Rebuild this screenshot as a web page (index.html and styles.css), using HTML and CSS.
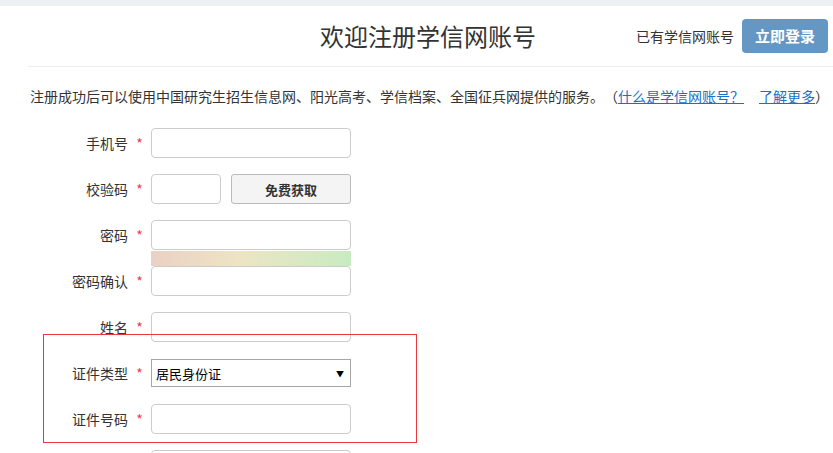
FILE: index.html
```html
<!DOCTYPE html>
<html lang="zh-CN">

<head>
  <meta charset="UTF-8">
  <meta name="viewport" content="width=device-width, initial-scale=1.0">
  <title>学信网账号注册</title>
  <link rel="stylesheet" href="styles.css">
</head>

<body>
  <div class="topbar"></div>
  <div class="header">
    <h1 class="title">欢迎注册学信网账号</h1>
    <div class="login">
      <span>已有学信网账号</span>
      <a class="login-btn" href="#">立即登录</a>
    </div>
  </div>

  <p class="intro">注册成功后可以使用中国研究生招生信息网、阳光高考、学信档案、全国征兵网提供的服务。（<a href="#">什么是学信网账号？</a><a class="more" href="#">了解更多</a>）</p>

  <form class="form">
    <div class="row">
      <label class="label">手机号</label>
      <span class="star">*</span>
      <input class="ipt" type="text">
    </div>
    <div class="row">
      <label class="label">校验码</label>
      <span class="star">*</span>
      <input class="ipt ipt-short" type="text">
      <button class="code-btn" type="button">免费获取</button>
    </div>
    <div class="row row-pwd">
      <label class="label">密码</label>
      <span class="star">*</span>
      <div class="pwd-box">
        <input class="ipt" type="password">
        <div class="strength"></div>
      </div>
    </div>
    <div class="row">
      <label class="label">密码确认</label>
      <span class="star">*</span>
      <input class="ipt" type="password">
    </div>
    <div class="row">
      <label class="label">姓名</label>
      <span class="star">*</span>
      <input class="ipt" type="text">
    </div>
    <div class="row">
      <label class="label">证件类型</label>
      <span class="star">*</span>
      <div class="select">
        <span>居民身份证</span>
        <span class="arrow">▼</span>
      </div>
    </div>
    <div class="row">
      <label class="label">证件号码</label>
      <span class="star">*</span>
      <input class="ipt" type="text">
    </div>
    <div class="row">
      <label class="label"></label>
      <span class="star"></span>
      <input class="ipt" type="text">
    </div>
  </form>

  <div class="mark"></div>
</body>

</html>
```

FILE: styles.css
```css
* {
  margin: 0;
  padding: 0;
  box-sizing: border-box;
}

body {
  font-family: "Noto Sans CJK SC", "Liberation Sans", sans-serif;
  font-size: 14px;
  color: #333;
  background: #fff;
  overflow: hidden;
  height: 453px;
  text-spacing-trim: space-all;
}

.topbar {
  height: 6px;
  background: #eef1f4;
}

.header {
  display: grid;
  grid-template-columns: 1fr auto 1fr;
  align-items: center;
  height: 61px;
  margin-left: 28px;
  padding-right: 5px;
  border-bottom: 1px solid #eceeef;
}

.title {
  grid-column: 2;
  font-size: 24px;
  font-weight: normal;
  color: #333;
  line-height: 1;
}

.login {
  grid-column: 3;
  justify-self: end;
  display: flex;
  align-items: center;
  gap: 8px;
}

.login span {
  font-size: 14px;
  color: #333;
}

.login-btn {
  display: block;
  width: 86px;
  height: 34px;
  line-height: 34px;
  text-align: center;
  background: #6497c4;
  color: #fff;
  font-weight: bold;
  font-size: 15px;
  border-radius: 4px;
  text-decoration: none;
}

.intro {
  padding: 19px 0 0 30px;
  height: 61px;
  line-height: 20px;
  font-size: 14px;
  white-space: nowrap;
}

.intro a {
  color: #1a6fc9;
  text-decoration: underline;
}

.intro .more {
  margin-left: 15px;
}

.form {
  display: flex;
  flex-direction: column;
  gap: 16px;
}

.row {
  display: flex;
  align-items: center;
  height: 30px;
}

.row-pwd {
  align-items: flex-start;
  height: 46px;
  margin-bottom: -16px;
}

.row-pwd .label,
.row-pwd .star {
  line-height: 30px;
}

.label {
  width: 128px;
  text-align: right;
  font-size: 14px;
  color: #333;
}

.star {
  width: 23px;
  text-align: center;
  color: #f3394c;
  font-size: 14px;
}

.ipt {
  width: 200px;
  height: 30px;
  border: 1px solid #ccc;
  border-radius: 4px;
  outline: none;
  background: #fff;
}

.ipt-short {
  width: 70px;
}

.code-btn {
  width: 120px;
  height: 30px;
  margin-left: 10px;
  border: 1px solid #bbb;
  border-radius: 3px;
  background: #f4f4f4;
  font-family: inherit;
  font-size: 13px;
  font-weight: bold;
  color: #333;
}

.pwd-box {
  display: flex;
  flex-direction: column;
  width: 200px;
}

.strength {
  height: 15px;
  margin-top: 1px;
  background: linear-gradient(100deg, #ebd0c4 0%, #ede5c4 45%, #c8ebc1 100%);
}

.select {
  display: flex;
  justify-content: space-between;
  align-items: center;
  width: 200px;
  height: 28px;
  padding: 0 6px 0 4px;
  border: 1px solid #a6a6a6;
  font-size: 13px;
  color: #000;
}

.select .arrow {
  font-size: 8px;
}

.mark {
  position: absolute;
  left: 43px;
  top: 334px;
  width: 374px;
  height: 109px;
  border: 1px solid #e8393c;
}
```
